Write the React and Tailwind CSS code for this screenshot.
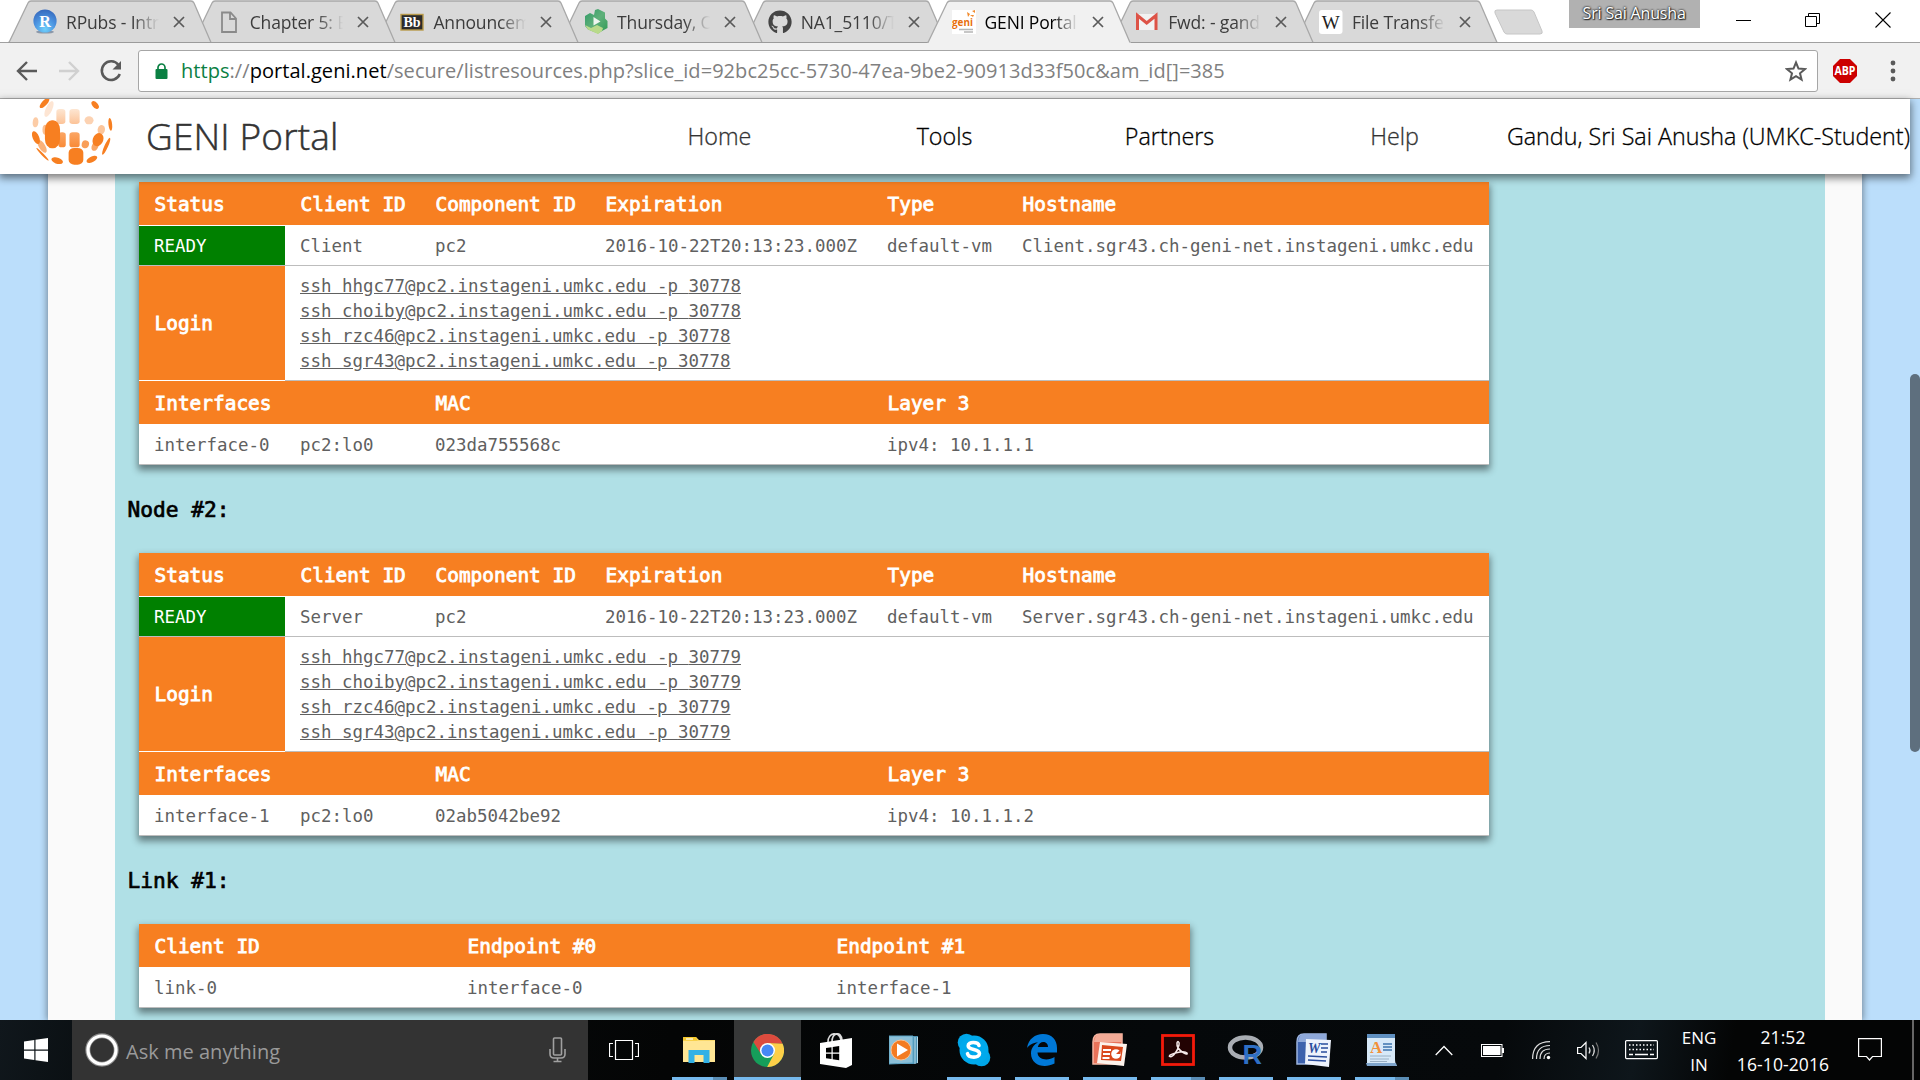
import React from "react";
import { FaGithub } from "react-icons/fa";

const NODES = [
  { name: "Client", port: "30778", iface: "interface-0", mac: "023da755568c", ip: "10.1.1.1" },
  { name: "Server", port: "30779", iface: "interface-1", mac: "02ab5042be92", ip: "10.1.1.2" },
];
const USERS = ["hhgc77", "choiby", "rzc46", "sgr43"];

const S = ({ w, h, vb, className = "", children, ...rest }) => (
  <svg width={w} height={h} viewBox={vb || `0 0 ${w} ${h}`} className={`shrink-0 ${className}`} fill="none" {...rest}>{children}</svg>
);

/* ---------- favicons ---------- */
const RPubs = () => (
  <S w={24} h={25}>
    <defs><radialGradient id="rp" cx=".5" cy=".85" r=".9"><stop offset="0" stopColor="#6fd0fb" /><stop offset=".5" stopColor="#4b93e0" /><stop offset="1" stopColor="#3363b8" /></radialGradient></defs>
    <ellipse cx="12" cy="23" rx="9" ry="1.6" fill="#8b97a8" />
    <circle cx="12" cy="12" r="11.6" fill="url(#rp)" />
    <text x="12" y="17.5" textAnchor="middle" fontSize="16" fontWeight="700" fontFamily="Liberation Serif, serif" fill="#fff">R</text>
  </S>
);
const Page = () => (
  <S w={24} h={24}><path d="M5 2.500h8.500l5.500 6v13.500H5zM13 2.500v6.500H19" stroke="#8a8a8a" strokeWidth="1.800" /></S>
);
const Bb = () => (
  <S w={24} h={24}><rect x="1" y="4.5" width="22" height="15.5" fill="#2b2b2b" stroke="#b89a4a" strokeWidth="1.4" /><text x="12" y="17" textAnchor="middle" fontSize="14" fontWeight="700" fontFamily="Liberation Serif, serif" fill="#fff">Bb</text></S>
);
const Green = () => (
  <S w={24} h={25}>
    <defs><linearGradient id="gr" x2="1" y2="1"><stop stopColor="#2f9a66" /><stop offset=".5" stopColor="#5fb07a" /><stop offset="1" stopColor="#2f9a55" /></linearGradient></defs>
    <path d="M11 1l3-1 7 3.500v6L23.500 12v7L18 22l-4 2.500L4 20.500 1 17V7l5-3 4 2z" fill="url(#gr)" />
    <path d="M1 16l6 3 6-3 6 3-1 3-4 3L4 20.500z" fill="#b9da8a" /><path d="M9.500 8l7 4.500-7 4z" fill="#eef5ee" />
  </S>
);
const Geni = () => (
  <S w={24} h={24}><rect width="24" height="24" fill="#fff" /><text x="0" y="15.500" fontSize="11" fontWeight="700" fontFamily="Open Sans, sans-serif" fill="#e8700e" textLength="21" lengthAdjust="spacingAndGlyphs">geni</text>
    <path d="M15 2l3 2-2 3zM20 1l3-1v3zM18 5l4 0-1 2z" fill="#f28a2c" /><path d="M7 19.500h14M12 22h9" stroke="#b5b5b5" strokeWidth="1.500" /></S>
);
const Gmail = () => (
  <S w={24} h={24}><rect x="1.500" y="4" width="20" height="16" fill="#f2f2f2" /><path d="M2.500 20V5.500L11.700 13 21 5.500V20" stroke="#dd5347" strokeWidth="3" /></S>
);
const Wiki = () => (
  <S w={24} h={24}><rect x="0" y="0" width="23.500" height="24" rx="3" fill="#fff" /><text x="11.700" y="18.500" textAnchor="middle" fontSize="19" fontFamily="Liberation Serif, serif" fill="#222">W</text></S>
);

/* Each tab overlaps the next one; the active tab sits above all. */
const TABS = [
  ["RPubs - Intr", RPubs, "z-10"], ["Chapter 5: E", Page, "z-[9]"], ["Announcem", Bb, "z-[8]"], ["Thursday, O", Green, "z-[7]"],
  ["NA1_5110/T", () => <FaGithub size={24} color="#444" />, "z-[6]"], ["GENI Portal", Geni, "z-20"], ["Fwd: - gand", Gmail, "z-[4]"], ["File Transfer", Wiki, "z-[3]"],
];

const Tab = ({ title, Icon, active, z }) => (
  <div className={`relative h-[43px] w-[204px] shrink-0 -mr-[20.3px] ${z}`}>
    <S w={204} h={43} className="absolute inset-0">
      <path d="M0 43L1 42 20 3Q21 1 23 1H183Q185 1 186 3L203 42 204 43" fill={active ? "#f1f1f1" : "#d9d9d9"} />
      <path d="M0 42.500H1L20 3Q21 1 23 1H183Q185 1 186 3L203 42.500" stroke="#a8a8a8" strokeWidth="1.300" />
      {!active && <path d="M0 42.500H204" stroke="#9b9b9b" />}
    </S>
    <div className="relative flex h-full items-center pl-[25px]">
      <span className="flex w-6 shrink-0">{<Icon />}</span>
      <span className={`ml-[9px] w-[96px] whitespace-nowrap text-[17.500px] leading-6 tracking-[-0.150px] [mask-image:linear-gradient(to_right,black_70%,transparent_97%)] ${active ? "text-black" : "text-[#3c3c3c]"}`}>{title}</span>
      <S w={12} h={12} className="ml-[11px]"><path d="M1 1l10 10M11 1L1 11" stroke="#5a5a5a" strokeWidth="1.700" /></S>
    </div>
  </div>
);

function ChromeBar() {
  return (
    <div className="flex h-[99px] shrink-0 flex-col bg-white">
      <div className="isolate flex h-[43px] items-start border-b border-[#a0a0a0] pl-2">
        {TABS.map(([t, I, z], i) => <Tab key={t} title={t} Icon={I} z={z} active={i === 5} />)}
        <S w={52} h={26} className="ml-[16px] mt-[9px]"><path d="M3 1H37Q39 1 40 3L48 22Q49 25 46 25H13Q11 25 10 23L1 4Q0 1 3 1z" fill="#d9d9d9" stroke="#c6c6c6" /></S>
        <div className="ml-[23px] flex h-7 w-[131px] items-center justify-center whitespace-nowrap bg-[#b1b1b1] pb-[2px] text-[16px] tracking-[-0.170px] text-white [text-shadow:0_0_2px_#222,0_0_2px_#222,1px_1px_1px_#333]">Sri Sai Anusha</div>
        <div className="ml-[36px] flex h-10 items-center">
          <S w={15} h={16}><path d="M0 8.500h15" stroke="#000" /></S>
          <S w={16} h={16} className="ml-[54px]"><path d="M.5 4.500h11v10H.5zM3.500 4V1.500h11v10H12" stroke="#000" /></S>
          <S w={16} h={16} className="ml-[54px]"><path d="M.5 .5l15 15M15.500 .5l-15 15" stroke="#000" strokeWidth="1.100" /></S>
        </div>
      </div>
      <div className="flex h-[56px] items-center border-b border-[#b0b0b0] bg-[#f1f1f1] pl-4">
        <S w={22} h={22}><path d="M21 11H3M11 2L2 11l9 9" stroke="#5a5a5a" strokeWidth="2.400" /></S>
        <S w={22} h={22} className="ml-5"><path d="M1 11h18M11 2l9 9-9 9" stroke="#d0d0d0" strokeWidth="2.400" /></S>
        <S w={24} h={24} className="ml-[19px]"><path d="M19.500 6A9.300 9.300 0 1 0 20.800 15" stroke="#5a5a5a" strokeWidth="2.500" /><path d="M22 2v8.500h-8.500z" fill="#5a5a5a" /></S>
        <div className="ml-[15px] flex h-[42px] w-[1680px] items-center rounded-[3px] border border-[#a6a6a6] bg-white pl-4">
          <S w={13} h={16}><rect x=".5" y="6" width="12" height="10" rx="1" fill="#0b8043" /><path d="M3 7V4.500a3.500 3.500 0 0 1 7 0V7" stroke="#0b8043" strokeWidth="1.700" /></S>
          <span className="ml-[13px] whitespace-nowrap text-[20px] tracking-[0.050px] text-[#808080]"><span className="text-[#0b8043]">https</span>://<span className="text-black">portal.geni.net</span>/secure/listresources.php?slice_id=92bc25cc-5730-47ea-9be2-90913d33f50c&amp;am_id[]=385</span>
          <S w={22} h={22} className="ml-auto mr-[10px]"><path d="M11 2.500l2.500 6.100 6.500.5-5 4.200 1.600 6.400L11 16.200l-5.600 3.500L7 13.300 2 9.100l6.500-.5z" stroke="#5a5a5a" strokeWidth="2" /></S>
        </div>
        <S w={24} h={24} className="ml-[15px]"><path d="M7 0h10l7 7v10l-7 7H7L0 17V7z" fill="#cc0000" /><text x="12" y="16" textAnchor="middle" fontSize="11.500" fontWeight="700" fontFamily="Open Sans, sans-serif" fill="#fff" textLength="21" lengthAdjust="spacingAndGlyphs">ABP</text></S>
        <S w={6} h={22} className="ml-[33px]"><circle cx="3" cy="3" r="2.400" fill="#5a5a5a" /><circle cx="3" cy="11" r="2.400" fill="#5a5a5a" /><circle cx="3" cy="19" r="2.400" fill="#5a5a5a" /></S>
      </div>
    </div>
  );
}

/* ---------- GENI site header ---------- */
const BLOBS = [
  [108, 308, 7, 18, 35, 1], [232, 314, 7, 13, -30, 1], [119, 326, 8, 25, 20, 0.2], [86, 366, 7, 15, 5, 0.4], [217, 360, 11, 12, 0, 0.35],
  [269, 372, 4.5, 19, -5, 1], [247, 388, 9, 14, 5, 0.45], [110, 388, 7, 15, 0, 0.5], [102, 438, 8, 21, -25, 0.6], [232, 437, 8, 15, 20, 0.7], [208, 432, 9, 12, 10, 0.75],
  [87, 412, 8, 20, -18, 1], [103, 462, 3, 24, -38, 1], [239, 418, 13, 20, 15, 1], [259, 438, 4.5, 27, 20, 1],
  [139, 481, 15, 9, 25, 1], [224, 477, 15, 8, -35, 1],
];
const GeniLogo = () => (
  <svg width="87" height="68" viewBox="70 296 213 204" preserveAspectRatio="none">
    <defs><linearGradient id="g1" x2="0" y2="1"><stop stopColor="#fde6d2" /><stop offset="1" stopColor="#fcc398" /></linearGradient><linearGradient id="g2" x2="0" y2="1"><stop stopColor="#fba665" /><stop offset="1" stopColor="#f98a36" /></linearGradient></defs>
    <rect x="137" y="326" width="22" height="45" rx="8" fill="url(#g1)" /><rect x="169" y="326" width="25" height="45" rx="8" fill="url(#g1)" />
    <rect x="142" y="396" width="18" height="45" rx="8" fill="url(#g2)" /><rect x="169" y="396" width="25" height="45" rx="8" fill="url(#g2)" />
    {BLOBS.map(([x, y, a, b, r, o], i) => <ellipse key={i} cx={x} cy={y} rx={a} ry={b} transform={`rotate(${r} ${x} ${y})`} fill="#f77f21" opacity={o} />)}
    <rect x="109" y="360" width="37" height="84" rx="17" ry="28" fill="#f77f21" />
    <rect x="167" y="443" width="36" height="50" rx="14" fill="#f77f21" />
  </svg>
);

const SiteHeader = () => (
  <header className="relative z-10 flex h-[75px] w-[1910px] shrink-0 bg-white font-light shadow-[0_3px_8px_1px_rgba(0,0,0,0.5)]">
    <div className="pl-[29px]"><GeniLogo /></div>
    <div className="ml-[30px] w-[420px] pt-[10px] text-[37px] leading-[54px] tracking-[0.150px] text-[#333] [-webkit-text-stroke:0.500px_#333]">GENI Portal</div>
    <nav className="flex pt-[19px] text-[23.300px] leading-9">
      <span className="w-[307px] text-center text-[#333] [-webkit-text-stroke:0.300px_#333]">Home</span>
      <span className="w-[143px] text-center text-black [-webkit-text-stroke:0.300px_black]">Tools</span>
      <span className="w-[307px] text-center text-black [-webkit-text-stroke:0.300px_black]">Partners</span>
      <span className="w-[143px] text-center text-[#333] [-webkit-text-stroke:0.300px_#333]">Help</span>
    </nav>
    <span className="ml-auto whitespace-nowrap pt-[19px] text-[23.300px] leading-9 text-black [-webkit-text-stroke:0.300px_black]">Gandu, Sri Sai Anusha (UMKC-Student)</span>
  </header>
);

/* ---------- tables ---------- */
const TH = "border-b border-white bg-[#f77f21] pl-[15.500px] pt-[2px] text-left font-normal whitespace-nowrap text-[19.450px] leading-6 text-white [-webkit-text-stroke:0.800px_white]";
const TD = "px-[15px] pt-[2px] text-left border-b border-[#bdbdbd]";
const TABLE = "ml-6 table-fixed border-separate border-spacing-0 bg-white font-['DejaVu_Sans_Mono',monospace] text-[17.450px] leading-[25px] text-[#606060] shadow-[0_4px_7px_1px_rgba(0,0,0,0.45)]";

const NodeTable = ({ n }) => (
  <table className={`${TABLE} w-[1350px]`}>
    <colgroup>{[146, 135, 170, 282, 135, 482].map((w, i) => <col key={i} style={{ width: w }} />)}</colgroup>
    <tbody>
      <tr className="h-11">{["Status", "Client ID", "Component ID", "Expiration", "Type", "Hostname"].map((t) => <th key={t} className={TH}>{t}</th>)}</tr>
      <tr className="h-10">
        <td className="border-b border-[#bdbdbd] bg-[#008000] px-[15px] pt-[2px] text-white">READY</td>
        <td className={TD}>{n.name}</td><td className={TD}>pc2</td><td className={TD}>2016-10-22T20:13:23.000Z</td><td className={TD}>default-vm</td>
        <td className={`${TD} whitespace-nowrap`}>{n.name}.sgr43.ch-geni-net.instageni.umkc.edu</td>
      </tr>
      <tr className="h-[115px]">
        <th className={TH}>Login</th>
        <td colSpan={5} className={TD}>{USERS.map((u) => <div key={u}><a className="underline">ssh {u}@pc2.instageni.umkc.edu -p {n.port}</a></div>)}</td>
      </tr>
      <tr className="h-11"><th colSpan={2} className={TH}>Interfaces</th><th colSpan={2} className={TH}>MAC</th><th colSpan={2} className={TH}>Layer 3</th></tr>
      <tr className="h-10"><td className={TD}>{n.iface}</td><td className={TD}>pc2:lo0</td><td colSpan={2} className={TD}>{n.mac}</td><td colSpan={2} className={TD}>ipv4: {n.ip}</td></tr>
    </tbody>
  </table>
);

const Title = ({ children }) => (
  <h2 className="flex h-[88px] items-center pl-[12.500px] pt-[2px] font-['DejaVu_Sans_Mono',monospace] text-[21.200px] text-black [-webkit-text-stroke:0.700px_black]">{children}</h2>
);

function Content() {
  return (
    <div className="flex min-h-0 flex-1 overflow-hidden bg-[#bbdefb] pl-12">
      <div className="h-full w-[1814px] bg-[#fafafa] pl-[67px] shadow-[0_0_7px_1px_rgba(0,0,0,0.4)]">
        <div className="h-full w-[1710px] bg-[#b0e0e6] pt-2">
          <NodeTable n={NODES[0]} />
          <Title>Node #2:</Title>
          <NodeTable n={NODES[1]} />
          <Title>Link #1:</Title>
          <table className={`${TABLE} w-[1051px]`}>
            <colgroup>{[313, 369, 369].map((w, i) => <col key={i} style={{ width: w }} />)}</colgroup>
            <tbody>
              <tr className="h-11">{["Client ID", "Endpoint #0", "Endpoint #1"].map((t) => <th key={t} className={TH}>{t}</th>)}</tr>
              <tr className="h-10">{["link-0", "interface-0", "interface-1"].map((t) => <td key={t} className={TD}>{t}</td>)}</tr>
            </tbody>
          </table>
        </div>
      </div>
    </div>
  );
}

/* ---------- taskbar ---------- */
const Explorer = () => (
  <S w={32} h={28}><path d="M0 2q0-1 1-1h12l3 3h16v22H0z" fill="#fbd96b" /><path d="M0 5h32v20q0 1-1 1H1q-1 0-1-1z" fill="#ffe694" /><path d="M0 2q0-1 1-1h12l1.500 3.500H0z" fill="#f6c92d" /><path d="M3 3h7" stroke="#fff" strokeWidth="1.200" /><path d="M5.500 27V14h21v13h-6v-8h-9v8z" fill="#32b1e6" /></S>
);
const Chrome = () => (
  <S w={33} h={33} vb="0 0 48 48">
    <circle cx="24" cy="24" r="24" fill="#169e5a" />
    <path d="M3.500 11.500A24 24 0 0 1 46 14H24A10.500 10.500 0 0 0 14.500 29z" fill="#dd4b3e" />
    <path d="M46 14A24 24 0 0 1 23.500 48L33.500 29Q36.500 20 24 13z" fill="#fdcf48" />
    <circle cx="24" cy="24" r="11" fill="#fff" /><circle cx="24" cy="24" r="8.800" fill="#4688f4" />
  </S>
);
const Store = () => (
  <S w={34} h={37}><path d="M9 10C9 0 20-1 22 8M13 10C13 1 22-2 23 8" stroke="#ddd" strokeWidth="1.600" /><path d="M1 11l32-5v27l-6 3L1 32z" fill="#fff" /><path d="M7 16l5.500-.8v5.300H7zM13.700 15l6.500-1v6.500h-6.500zM7 21.700h5.500V27L7 26.200zM13.700 21.700h6.500v6.500l-6.500-1z" fill="#000" /></S>
);
const Player = () => (
  <S w={30} h={30}><path d="M8 1h21v27l-4 1H8z" fill="#4d93b5" /><path d="M26 2v27M28.500 2v26" stroke="#b9dceb" strokeWidth="1" /><path d="M0 1h24v27l-24 1z" fill="#8cc0d8" stroke="#5ba3c4" /><circle cx="12" cy="15" r="10" fill="#f37b21" stroke="#fac08f" /><path d="M8 8.500l11 6.500-11 6.500z" fill="#fff" /></S>
);
const Skype = () => (
  <S w={34} h={34}><circle cx="9.500" cy="9.500" r="8.800" fill="#00a6e9" /><circle cx="24.500" cy="24.500" r="8.800" fill="#00a6e9" /><circle cx="17" cy="17" r="14.500" fill="#00a9ec" /><path d="M22 12.500c-1-4-11-4-10.800.3.200 4.700 11.300 2.600 11.300 7.700 0 5-11 4.700-12 .2" stroke="#fff" strokeWidth="3.600" strokeLinecap="round" /></S>
);
const Edge = () => (
  <S w={30} h={32}><path d="M0 14C1.500 5 8 0 16 0c9 0 14 6 14 14v4.500H10.500c.5 8 11 8.500 17 4.500v6.500C17 35 4 31 4 19.500 4 14 7 10.500 11 8.500 6 8.500 2 11 0 14zM10.800 13H21c0-6-8.500-7-10.200 0z" fill="#0078d7" /></S>
);
const Ppt = () => (
  <S w={36} h={34}><path d="M8 1h22v30H1V9q0-8 7-8z" fill="#e8735a" stroke="#f6b6a2" strokeWidth="1.500" /><path d="M8 1h22v8H2q1-8 6-8z" fill="#f3ab97" /><path d="M8 9l27 2-3 22L5 30z" fill="#fdf3ec" /><path d="M10 12l21 2-2 14-20-1z" fill="#d9481c" /><path d="M11 17h8M11 21h7M10.500 25h7" stroke="#fff" strokeWidth="2" /><circle cx="24" cy="21" r="4.800" fill="#fff" /><path d="M24 21l4.500-4.500v4.500z" fill="#d9481c" /></S>
);
const Pdf = () => (
  <S w={34} h={32}><rect x="1.500" y="1.500" width="31" height="29" fill="#230303" stroke="#f41a0a" strokeWidth="2.800" /><path d="M8.500 22.500c-2-2 14.500-7 17.500-3.500 2 3.500-11-2.500-10-10 .3-2.500 2.800-1.500 2 2-1 5-6.500 13.500-9.500 11.500z" stroke="#f5e9e9" strokeWidth="1.500" /></S>
);
const RIcon = () => (
  <S w={38} h={30}><ellipse cx="18.500" cy="12.500" rx="15.500" ry="10" stroke="#a9adb3" strokeWidth="4.500" /><text x="15.500" y="28.500" fontSize="27" fontWeight="700" fontFamily="Liberation Sans, sans-serif" fill="#2f6fc4">R</text></S>
);
const Word = () => (
  <S w={36} h={34}><path d="M8 1h22v30H1V9q0-8 7-8z" fill="#3d62ad" stroke="#9db5e0" strokeWidth="1.500" /><path d="M8 1h22v8H2q1-8 6-8z" fill="#8fa9da" /><path d="M10 6l25 1-2 27-24-3z" fill="#eef3fc" /><text x="12" y="20" fontSize="14" fontStyle="italic" fontWeight="700" fontFamily="Liberation Serif, serif" fill="#2a4d9c">W</text><path d="M25 11h7M25 15h7M25 19h6M12 23l19 1M12 27l18 1" stroke="#2a4d9c" strokeWidth="1.700" /></S>
);
const Wordpad = () => (
  <S w={32} h={34}><path d="M1 1h28v25q0 5 2 7H1z" fill="#d7e9f8" /><path d="M1 1h28v4H1z" fill="#5f8fc0" /><path d="M0 30h30l1 3H1z" fill="#7fa5cc" /><text x="4" y="20" fontSize="17" fontWeight="700" fontFamily="Liberation Serif, serif" fill="#f3913a">A</text><path d="M17 11h9M17 14h9M17 17h9" stroke="#3f74ad" strokeWidth="1.400" /><path d="M4 23h21M4 26h19M4 28.500h17" stroke="#9ab0c4" /></S>
);

const APPS = [
  [Explorer, "w-[70px]", "w-[41px]", true], [Chrome, "w-[67px] bg-[#373838]", "w-[67px]"], [Store, "w-[69px]"], [Player, "w-[67px]"],
  [Skype, "ml-[3px] w-[68px]", "w-[54px]"], [Edge, "w-[68px]", "w-[54px]"], [Ppt, "w-[68px]", "w-[54px]"], [Pdf, "w-[68px]", "w-[40px]", true],
  [RIcon, "w-[68px]", "w-[54px]"], [Word, "w-[68px]", "w-[54px]"], [Wordpad, "w-[68px]", "w-[40px]", true],
];

function Taskbar() {
  return (
    <footer className="flex h-[60px] shrink-0 bg-[linear-gradient(100deg,#10171c_0%,#0a0f12_5%,#040505_35%,#05080a_60%,#06090b_78%,#0e161b_85%,#040505_90%)] text-white">
      <div className="flex w-[72px] items-center justify-center"><S w={24} h={24}><path d="M0 3.500L10.300 2v9.500H0zM11.500 1.800L24 0v11.500H11.500zM0 12.700h10.300V22L0 20.500zM11.500 12.700H24V24l-12.500-1.800z" fill="#fff" /></S></div>
      <div className="flex w-[516px] items-center bg-[#333] pl-[13px] pr-[22px]">
        <S w={34} h={34}><circle cx="17" cy="17" r="14.200" stroke="#8a8a8a" strokeWidth="5" /><circle cx="17" cy="17" r="14" stroke="#fff" strokeWidth="3.200" /></S>
        <span className="ml-[7px] mt-[4px] whitespace-nowrap text-[20px] tracking-[0.020px] text-[#9a9a9a]">Ask me anything</span>
        <S w={17} h={26} className="ml-auto"><rect x="4.500" y="1" width="8" height="17" rx="1" stroke="#a0a0a0" strokeWidth="1.600" /><path d="M1 12v5q0 4 4 4h7q4 0 4-4v-5M8.500 21v3M4.500 24.500h8" stroke="#a0a0a0" strokeWidth="1.600" /></S>
      </div>
      <div className="flex w-[76px] items-center pl-[21px]"><S w={30} h={20}><path d="M6.500.5h17v19h-17zM4 3.500H.5v13H4M26 3.500h3.500v13H26" stroke="#fff" strokeWidth="1.200" /></S></div>
      {APPS.map(([I, cell, bar, split], i) => (
        <div key={i} className={`flex flex-col items-center ${cell}`}>
          <div className="flex h-[57px] items-center pt-[3px]"><I /></div>
          {bar && <div className="flex h-[3px]"><i className={`bg-[#76b9ed] ${bar}`} />{split && <i className="w-[14px] bg-[#5a8db5]" />}</div>}
        </div>
      ))}
      <div className="flex items-center pl-[19px]">
        <S w={18} h={11}><path d="M.7 10L9 1.500l8.300 8.500" stroke="#fff" strokeWidth="1.300" /></S>
        <S w={23} h={13} className="ml-[28px]"><rect x=".5" y=".5" width="20.500" height="12" stroke="#fff" /><path d="M2 2h17.500v9H2zM21 4h2v5h-2z" fill="#fff" /></S>
        <S w={19} h={19} className="ml-[28px]"><circle cx="16.500" cy="16.500" r="1.700" fill="#fff" /><path d="M12 18q0-6 6-6M8 18Q8 8 18 8M4.500 18Q4.500 4.500 18 4.500M.6 18Q.6.6 18 .6" stroke="#ddd" strokeWidth="1.200" /></S>
        <S w={23} h={19} className="ml-[26px]"><path d="M.6 6.500H4L9 1.500v16l-5-5H.6z" stroke="#fff" strokeWidth="1.200" /><path d="M12 6.500q2 3 0 6M15.500 4q3.500 5.500 0 11" stroke="#ddd" strokeWidth="1.200" /><path d="M19 1.500q5 8 0 16" stroke="#777" strokeWidth="1.200" /></S>
        <S w={33} h={20} className="ml-[25px]"><rect x=".6" y=".6" width="31.800" height="18" rx="1" stroke="#fff" strokeWidth="1.200" /><path d="M4 5h25M4 9.500h25" stroke="#fff" strokeWidth="1.300" strokeDasharray="1.500 2" /><path d="M4 14.500h4M10 14.500h13M25 14.500h4" stroke="#fff" strokeWidth="1.300" /></S>
      </div>
      <div className="ml-[18px] w-[46px] pt-[4px] text-center text-[17px] leading-[27px]"><div>ENG</div><div>IN</div></div>
      <div className="ml-[9px] w-[104px] pt-[4px] text-center text-[17.500px] leading-[27px] tracking-[0.100px]"><div>21:52</div><div>16-10-2016</div></div>
      <S w={24} h={24} className="ml-[23px] mt-[18px]"><path d="M.6.6h22.800v17.900H14.500L11.500 22l-3-3.500H.6z" stroke="#fff" strokeWidth="1.200" /></S>
      <div className="ml-auto mr-[6px] w-[2px] bg-[#666]" />
    </footer>
  );
}

export default function App() {
  return (
    <div className="relative flex h-[1080px] w-[1920px] flex-col overflow-hidden bg-[#bbdefb] font-['Open_Sans','Noto_Sans',sans-serif]">
      <ChromeBar />
      <SiteHeader />
      <Content />
      <div className="absolute left-[1910px] top-[374px] h-[378px] w-[10px] rounded-[5px] bg-[#5e6f7e]" />
      <Taskbar />
    </div>
  );
}
